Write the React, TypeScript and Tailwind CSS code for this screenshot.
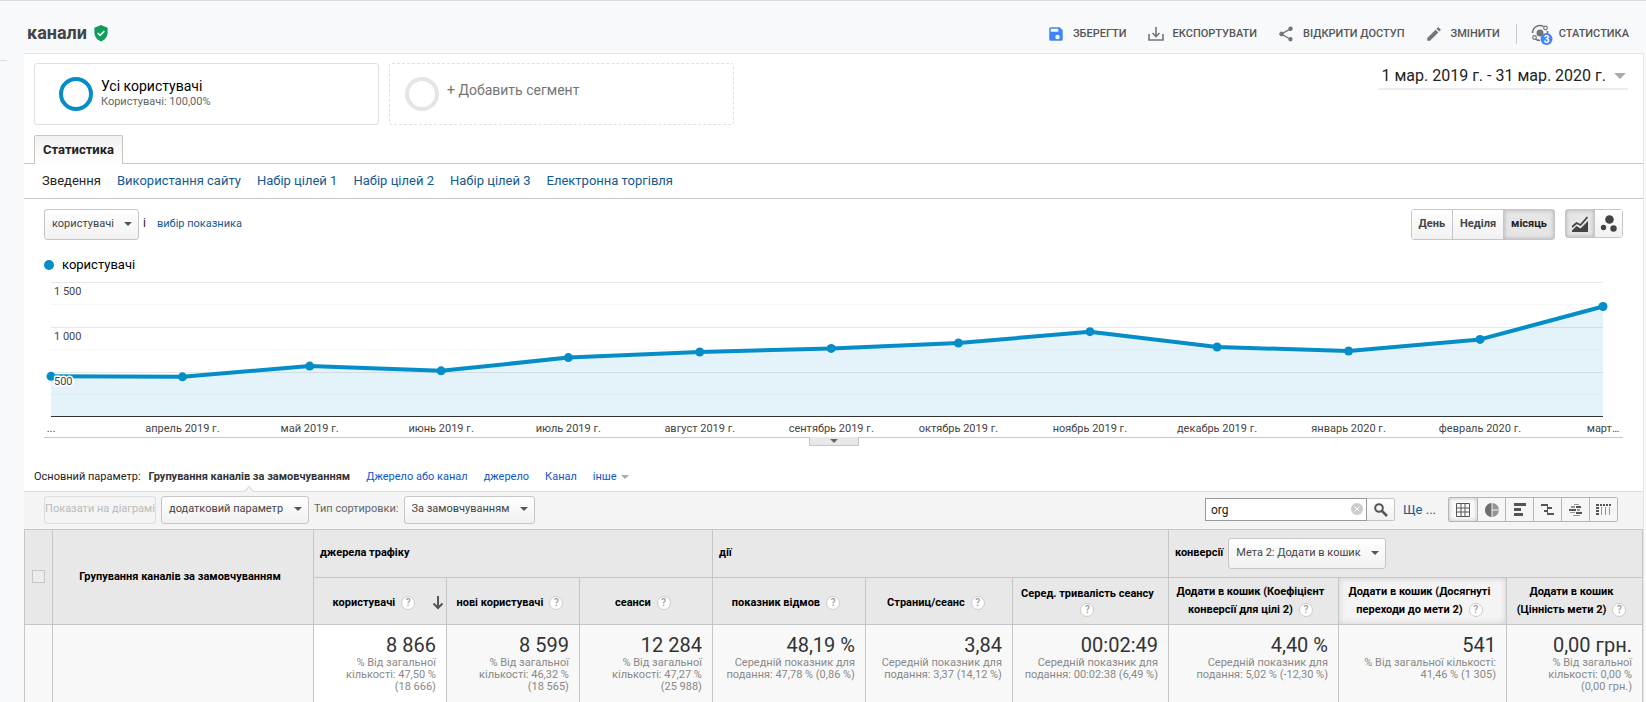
import { useState } from "react";

const icons = {
  save: "M17 3H5a2 2 0 0 0-2 2v14a2 2 0 0 0 2 2h14a2 2 0 0 0 2-2V7l-4-4zm-3 16a3 3 0 1 1 0-6 3 3 0 0 1 0 6zm1-10H5V5h10v4z",
  share: "M18 16.1c-.8 0-1.4.3-2 .8l-7.1-4.2a3.3 3.3 0 0 0 0-1.4L16 7.2a3 3 0 1 0-1-2.2c0 .2 0 .5.1.7L8 9.8a3 3 0 1 0 0 4.4l7.1 4.2-.1.6a2.9 2.9 0 1 0 3-2.9z",
  pencil: "M3 17.25V21h3.75L17.8 9.9l-3.7-3.7L3 17.25zM20.7 7c.4-.4.4-1 0-1.4l-2.3-2.3a1 1 0 0 0-1.4 0l-1.8 1.8 3.7 3.7L20.7 7z",
};

const points = [
  { label: "...", day: 0, users: 452 },
  { label: "апрель 2019 г.", day: 31, users: 446 },
  { label: "май 2019 г.", day: 61, users: 566 },
  { label: "июнь 2019 г.", day: 92, users: 513 },
  { label: "июль 2019 г.", day: 122, users: 660 },
  { label: "август 2019 г.", day: 153, users: 722 },
  { label: "сентябрь 2019 г.", day: 184, users: 762 },
  { label: "октябрь 2019 г.", day: 214, users: 822 },
  { label: "ноябрь 2019 г.", day: 245, users: 948 },
  { label: "декабрь 2019 г.", day: 275, users: 778 },
  { label: "январь 2020 г.", day: 306, users: 733 },
  { label: "февраль 2020 г.", day: 337, users: 862 },
  { label: "март…", day: 366, users: 1228 },
];

const goals = ["Використання сайту", "Набір цілей 1", "Набір цілей 2", "Набір цілей 3", "Електронна торгівля"];
const dimensions = ["Джерело або канал", "джерело", "Канал"];

const columns = [
  { title: ["користувачі"], value: "8 866", note: ["% Від загальної", "кількості: 47,50 %", "(18 666)"], sorted: true },
  { title: ["нові користувачі"], value: "8 599", note: ["% Від загальної", "кількості: 46,32 %", "(18 565)"] },
  { title: ["сеанси"], value: "12 284", note: ["% Від загальної", "кількості: 47,27 %", "(25 988)"] },
  { title: ["показник відмов"], value: "48,19 %", note: ["Середній показник для", "подання: 47,78 % (0,86 %)"] },
  { title: ["Страниц/сеанс"], value: "3,84", note: ["Середній показник для", "подання: 3,37 (14,12 %)"] },
  { title: ["Серед. тривалість сеансу", ""], value: "00:02:49", note: ["Середній показник для", "подання: 00:02:38 (6,49 %)"] },
  { title: ["Додати в кошик (Коефіцієнт", "конверсії для цілі 2)"], value: "4,40 %", note: ["Середній показник для", "подання: 5,02 % (-12,30 %)"] },
  { title: ["Додати в кошик (Досягнуті", "переходи до мети 2)"], value: "541", note: ["% Від загальної кількості:", "41,46 % (1 305)"], active: true },
  { title: ["Додати в кошик", "(Цінність мети 2)"], value: "0,00 грн.", note: ["% Від загальної", "кількості: 0,00 %", "(0,00 грн.)"] },
];

function Icon({ d, className }: { d: string; className: string }) {
  return (
    <svg viewBox="0 0 24 24" className={className} fill="currentColor" aria-hidden="true">
      <path d={d} />
    </svg>
  );
}

function Caret({ className }: { className: string }) {
  return (
    <svg viewBox="0 0 8 4" className={className} fill="currentColor" aria-hidden="true">
      <path d="M0 0h8L4 4z" />
    </svg>
  );
}

function Dropdown({ label, option, className }: { label: string; option: string; className: string }) {
  return (
    <span className="relative inline-flex">
      <select
        aria-label={label}
        className={`appearance-none rounded-[3px] border border-[#c6c6c6] bg-linear-to-b from-white to-[#f1f1f1] pr-6 pl-[7px] text-[11px] font-normal text-[#444] ${className}`}
      >
        <option>{option}</option>
      </select>
      <span className="pointer-events-none absolute inset-y-0 right-[7px] flex items-center pb-0.5">
        <Caret className="h-1 w-2 text-[#555]" />
      </span>
    </span>
  );
}

function Help() {
  return (
    <button
      type="button"
      aria-label="Довідка"
      className="inline-flex size-3.5 shrink-0 items-center justify-center rounded-full border border-[#ccc] bg-white text-[10px] leading-none font-medium text-[#999]"
    >
      ?
    </button>
  );
}

function Chart() {
  const y = (users: number) => 136 - (users * 135) / 1500;
  const line = points.map((p) => `${p.day},${y(p.users)}`).join(" ");

  return (
    <svg className="block h-[156px] w-full overflow-visible text-[11px]" role="img" aria-label="користувачі">
      {[250, 500, 750, 1000, 1250, 1500].map((v) => (
        <rect key={v} x="0" y={Math.floor(y(v))} width="100%" height="1" fill={v % 500 ? "#f6f6f6" : "#e8e8e8"} />
      ))}
      <svg width="100%" height="136" viewBox="0 0 366 136" preserveAspectRatio="none" overflow="visible">
        <polygon points={`0,136 ${line} 366,136`} fill="#058dc7" fillOpacity="0.11" />
        <polyline points={line} fill="none" stroke="#058dc7" strokeWidth="4" strokeLinejoin="round" vectorEffect="non-scaling-stroke" />
      </svg>
      {points.map((p) => (
        <circle key={p.day} cx={`${(p.day / 366) * 100}%`} cy={y(p.users)} r="4.5" fill="#058dc7" />
      ))}
      <rect x="0" y="135" width="100%" height="1" fill="#333" />
      {["1 500", "1 000", "500"].map((text, i) => (
        <text key={text} x="3" y={14 + i * 45} fill="#444" stroke="#fff" strokeWidth="3" strokeLinejoin="round" paintOrder="stroke">
          {text}
        </text>
      ))}
      {points.map((p) => (
        <text key={p.label} x={`${(p.day / 366) * 100}%`} y="151" textAnchor="middle" fill="#444">
          {p.label}
        </text>
      ))}
    </svg>
  );
}

const views = [
  { name: "Таблиця", art: <path d="M1.5 1.5h13v13h-13zM1.5 6h13M1.5 10h13M6 1.5v13M10 1.5v13" fill="none" stroke="currentColor" /> },
  {
    name: "Відсоток",
    art: (
      <>
        <circle cx="8" cy="8" r="7" opacity="0.6" />
        <path d="M8 1a7 7 0 0 0 0 14z" opacity="0.6" />
        <path d="M8 1v14M8 8h7" stroke="#f6f6f6" />
      </>
    ),
  },
  { name: "Ефективність", art: <path d="M2 1h12v3H2zM2 6h7v3H2zM2 11h9v3H2z" /> },
  { name: "Порівняння", art: <path d="M1 2h6v2H1zM8 5h4v2H8zM4 8h3v2H4zM8 11h6v2H8zM7 2h1v11H7z" /> },
  {
    name: "Хмара термінів",
    art: (
      <>
        <path d="M6 2h5v1H6zM3 4h4v2H3zM9 7h3v2H9zM2 10h5v1H2zM5 13h7v1H5z" opacity="0.6" />
        <path d="M8 4h5v2H8zM1 7h7v2H1zM8 10h6v2H8z" />
      </>
    ),
  },
  {
    name: "Зведення",
    art: (
      <>
        <path d="M0 2h3v2H0zM4 2h2v2H4zM7 2h2v2H7zM10 2h2v2h-2zM13 2h2v2h-2zM0 5h3v2H0zM0 8h3v2H0zM0 11h3v2H0z" />
        <path d="M5 5h1v8H5zM9 5h1v8H9zM13 5h1v8h-1z" opacity="0.6" />
      </>
    ),
  },
];

export default function App() {
  const [period, setPeriod] = useState("місяць");
  const [search, setSearch] = useState("org");
  const [view, setView] = useState("Таблиця");

  return (
    <div className="min-h-screen overflow-hidden border-t border-[#dadce0] bg-[#f8f9fb] font-[Roboto,sans-serif] text-xs text-[#222]">
      <header className="flex h-13 items-center justify-between pr-[17px] pl-[27px]">
        <div className="flex items-center gap-1.5 pt-3">
          <h1 className="text-lg font-bold text-[#444]">канали</h1>
          <svg viewBox="0 0 16 18" className="h-[17px] w-4" aria-hidden="true">
            <path d="M8 0 15 3v5c0 4.5-3 8-7 9.5C4 16 1 12.5 1 8V3z" fill="#0f9d58" />
            <path d="m4.5 8.5 2.5 2.5 4.5-4.5" fill="none" stroke="#fff" strokeWidth="1.6" />
          </svg>
        </div>
        <div className="flex items-center pt-3.5 text-[11px] font-medium text-[#555]">
          <button type="button" className="flex items-center gap-2">
            <Icon d={icons.save} className="size-[18px] text-[#4285f4]" />
            ЗБЕРЕГТИ
          </button>
          <button type="button" className="ml-5 flex items-center gap-2">
            <svg viewBox="0 0 18 18" className="size-[18px] text-[#757575]" fill="none" stroke="currentColor" strokeWidth="1.6" aria-hidden="true">
              <path d="M2 9v6h14V9M9 2v9M5.5 8 9 11.5 12.5 8" />
            </svg>
            ЕКСПОРТУВАТИ
          </button>
          <button type="button" className="ml-5 flex items-center gap-2">
            <Icon d={icons.share} className="size-[18px] text-[#757575]" />
            ВІДКРИТИ ДОСТУП
          </button>
          <button type="button" className="ml-5 flex items-center gap-2">
            <Icon d={icons.pencil} className="size-[18px] text-[#757575]" />
            ЗМІНИТИ
          </button>
          <span className="mr-3.5 ml-4 h-5 w-px bg-[#ccc]" />
          <button type="button" className="flex items-center gap-1.5">
            <svg viewBox="0 0 22 22" className="size-[22px]" aria-hidden="true">
              <circle cx="9" cy="10" r="3.5" fill="#757575" />
              <path d="M1.500 10a7.500 7.500 0 0 1 11-6.500M16.500 8v4M4.500 16a7.500 7.500 0 0 0 4.500 1.500" fill="none" stroke="#757575" strokeWidth="1.6" />
              <circle cx="14.5" cy="5" r="1.8" fill="none" stroke="#757575" strokeWidth="1.2" />
              <circle cx="3.5" cy="14.5" r="1.8" fill="none" stroke="#757575" strokeWidth="1.2" />
              <circle cx="15.5" cy="16" r="6" fill="#4285f4" />
              <text x="15.5" y="19.5" textAnchor="middle" fill="#fff" fontSize="10" fontWeight="700">3</text>
            </svg>
            СТАТИСТИКА
          </button>
        </div>
      </header>

      <div className="flex">
        <div className="w-6 shrink-0 pt-[7px]">
          <div className="h-px w-[7px] bg-[#dadce0]" />
        </div>
        <main className="mr-0.5 min-w-0 flex-1 border-t border-r border-[#e4e5e7] bg-white">
          <section className="flex items-start justify-between pt-[9px] pr-[15px] pl-2.5">
            <div className="flex gap-2.5">
              <button type="button" className="flex h-[62px] w-[345px] items-center gap-2 rounded-[3px] border border-[#e0e0e0] pl-6 text-left">
                <span className="size-[34px] rounded-full border-4 border-[#058dc7]" />
                <span>
                  <span className="block text-sm leading-4 text-black">Усі користувачі</span>
                  <span className="block text-[11px] leading-4 text-[#666]">Користувачі: 100,00%</span>
                </span>
              </button>
              <button type="button" className="flex h-[62px] w-[345px] items-center gap-2 rounded-[3px] border border-dashed border-[#e0e0e0] pl-[15px] text-left text-sm text-[#757575]">
                <span className="size-[34px] rounded-full border-4 border-[#e5e5e5]" />
                <span className="pb-2">+ Добавить сегмент</span>
              </button>
            </div>
            <button type="button" className="flex h-[27px] items-center gap-2 border-b-2 border-[#ececec] pr-0.5 pl-[3px] text-base text-[#222]">
              1 мар. 2019 г. - 31 мар. 2020 г.
              <Caret className="h-1.5 w-3 text-[#aaa]" />
            </button>
          </section>

          <div className="mt-2.5 flex border-b border-[#c6c6c6] pl-2.5">
            <button type="button" className="-mb-px h-[29px] rounded-t-[2px] border border-b-0 border-[#c6c6c6] bg-linear-to-b from-[#f1f1f1] to-white px-2 text-[13px] font-bold text-[#222]">
              Статистика
            </button>
          </div>
          <nav className="flex h-[35px] items-center gap-4 border-b border-[#c6c6c6] pl-[18px] text-[13px] text-[#15598f]">
            <a href="#summary" className="text-[#222]">Зведення</a>
            {goals.map((g) => (
              <a key={g} href="#goals">{g}</a>
            ))}
          </nav>

          <section className="px-5">
            <div className="flex items-start justify-between pt-2.5">
              <div className="flex items-center">
                <Dropdown label="Показник" option="користувачі" className="h-[31px]" />
                <span className="ml-1 pb-1 text-xs">і</span>
                <a href="#metric" className="ml-[11px] text-[11px] text-[#15598f]">вибір показника</a>
              </div>
              <div className="flex items-start gap-2.5">
                <div className="flex h-[31px] rounded-[3px] border border-[#c6c6c6] text-[11px] font-bold text-[#444]">
                  {["День", "Неділя", "місяць"].map((p) => (
                    <button
                      key={p}
                      type="button"
                      onClick={() => setPeriod(p)}
                      className={`border-l border-[#c6c6c6] px-[7px] first:border-l-0 ${
                        p === period ? "bg-[#e6e6e6] text-[#222] inset-shadow-[0_0_4px_#aaa]" : "bg-linear-to-b from-white to-[#f1f1f1]"
                      }`}
                    >
                      {p}
                    </button>
                  ))}
                </div>
                <div className="flex h-[29px] rounded-[3px] border border-[#c6c6c6] text-[#444]">
                  <button type="button" aria-label="Лінійна діаграма" className="flex w-7 items-center justify-center bg-[#e6e6e6] inset-shadow-[0_0_4px_#aaa]">
                    <svg viewBox="0 0 16 16" className="size-4" fill="currentColor" aria-hidden="true">
                      <path d="M0 16v-1.5l4.500-4.500 4 2.500L16 5v11z" />
                      <path d="m0 11 4.500-4 4 2L15.500 1" fill="none" stroke="currentColor" strokeWidth="1.8" />
                    </svg>
                  </button>
                  <button type="button" aria-label="Діаграма руху" className="flex w-7 items-center justify-center border-l border-[#c6c6c6] bg-linear-to-b from-white to-[#f1f1f1]">
                    <svg viewBox="0 0 18 18" className="size-[18px]" fill="currentColor" aria-hidden="true">
                      <circle cx="9.5" cy="4.5" r="4.3" />
                      <circle cx="3.5" cy="12.5" r="2.7" />
                      <circle cx="13.5" cy="13.5" r="3.2" />
                    </svg>
                  </button>
                </div>
              </div>
            </div>

            <div className="mt-[17px] flex h-4 items-center gap-2 text-[13px] text-black">
              <span className="size-2.5 rounded-full bg-[#058dc7]" />
              користувачі
            </div>
            <div className="mt-2 border-b border-[#c6c6c6] pr-5 pl-[7px]">
              <Chart />
            </div>
            <button type="button" aria-label="Розгорнути" className="mx-auto -mt-px flex h-[9px] w-[50px] items-center justify-center border border-t-0 border-[#c6c6c6] bg-[#e8e8e8] text-[#666]">
              <Caret className="h-1 w-2" />
            </button>
          </section>

          <div className="mt-[23px] flex h-[22px] items-start pl-2.5 text-[11px] leading-4 text-[#1155cc]">
            <span className="text-[#222]">Основний параметр:</span>
            <span className="relative ml-2 font-bold text-[#333]">
              Групування каналів за замовчуванням
              <svg viewBox="0 0 12 7" className="absolute top-4 left-1/2 h-[7px] w-3 -translate-x-1/2" aria-hidden="true">
                <path d="m1 7 5-5.500L11 7" fill="#f4f4f4" stroke="#ccc" />
              </svg>
            </span>
            {dimensions.map((d) => (
              <a key={d} href="#dimension" className="ml-4">{d}</a>
            ))}
            <a href="#other" className="ml-4 flex items-center gap-1">
              інше <Caret className="h-1 w-2 text-[#aaa]" />
            </a>
          </div>

          <div className="flex h-[38px] items-center justify-between border-t border-[#e0e0e0] bg-[#f4f4f4] pr-[25px] pb-0.5 pl-5">
            <div className="flex items-center text-[11px] text-[#666]">
              <button type="button" disabled className="h-7 w-[112px] rounded-[3px] border border-[#ddd] whitespace-nowrap text-[#bbb]">
                Показати на діаграмі
              </button>
              <span className="ml-[5px] inline-flex">
                <Dropdown label="Додатковий параметр" option="додатковий параметр" className="h-7" />
              </span>
              <span className="mx-[5px]">Тип сортировки:</span>
              <Dropdown label="Тип сортировки" option="За замовчуванням" className="h-7" />
            </div>
            <div className="flex items-center">
              <div className="relative flex h-[23px]">
                <input
                  aria-label="Пошук"
                  value={search}
                  onChange={(e) => setSearch(e.target.value)}
                  className="w-[162px] border border-[#999] bg-white pr-6 pl-[5px] text-xs text-[#222]"
                />
                <button type="button" aria-label="Очистити" onClick={() => setSearch("")} className="absolute top-[5px] left-[146px]">
                  <svg viewBox="0 0 12 12" className="size-3" aria-hidden="true">
                    <circle cx="6" cy="6" r="6" fill="#ccc" />
                    <path d="m3.500 3.500 5 5m0-5-5 5" stroke="#fff" />
                  </svg>
                </button>
                <button type="button" aria-label="Шукати" className="flex w-7 items-center justify-center rounded-r-[2px] border border-l-0 border-[#c6c6c6] bg-linear-to-b from-white to-[#f1f1f1]">
                  <svg viewBox="0 0 14 14" className="size-3.5" fill="none" stroke="#555" aria-hidden="true">
                    <circle cx="5" cy="5" r="3.8" strokeWidth="2" />
                    <path d="m8 8 5 5" strokeWidth="2.5" />
                  </svg>
                </button>
              </div>
              <a href="#more" className="ml-2 text-[13px] text-[#15598f]">Ще ...</a>
              <div className="ml-3 flex h-[25px] rounded-[2px] border border-[#b5b5b5]">
                {views.map((v) => (
                  <button
                    key={v.name}
                    type="button"
                    aria-label={v.name}
                    onClick={() => setView(v.name)}
                    className={`flex w-7 items-center justify-center border-l border-[#b5b5b5] text-[#555] first:border-l-0 ${
                      v.name === view ? "bg-[#fafafa] inset-shadow-[0_0_4px_#bbb]" : "bg-[#f6f6f6]"
                    }`}
                  >
                    <svg viewBox="0 0 16 16" className="size-4" fill="currentColor" aria-hidden="true">
                      {v.art}
                    </svg>
                  </button>
                ))}
              </div>
            </div>
          </div>

          <table className="w-full table-fixed border-collapse text-[11px] text-black">
            <colgroup>
              <col className="w-7" />
              <col />
              <col className="w-[133px]" />
              <col className="w-[133px]" />
              <col className="w-[133px]" />
              <col className="w-[153px]" />
              <col className="w-[147px]" />
              <col className="w-[156px]" />
              <col className="w-[170px]" />
              <col className="w-[168px]" />
              <col className="w-[136px]" />
            </colgroup>
            <thead className="bg-[#e8e8e8] [&_th]:border [&_th]:border-[#c6c6c6]">
              <tr className="h-12 text-left">
                <th rowSpan={2} className="text-center">
                  <input type="checkbox" aria-label="Вибрати всі" className="size-[13px] appearance-none border border-[#c6c6c6] bg-[#ececec] align-middle" />
                </th>
                <th rowSpan={2} className="pr-1.5 text-center">Групування каналів за замовчуванням</th>
                <th colSpan={3} className="px-1.5">джерела трафіку</th>
                <th colSpan={3} className="px-1.5">дії</th>
                <th colSpan={3} className="px-1.5">
                  <div className="flex items-center gap-[5px]">
                    конверсії
                    <Dropdown label="Мета" option="Мета 2: Додати в кошик" className="h-[31px]" />
                  </div>
                </th>
              </tr>
              <tr className="h-[47px]">
                {columns.map((c) => (
                  <th
                    key={c.value}
                    className={`pl-0.5 leading-[18px] ${c.sorted ? "pr-0.5" : "pr-2"} ${c.title.length > 1 ? "" : "pt-1"} ${
                      c.active ? "bg-[#f4f4f4] inset-shadow-[0_0_6px_#ccc]" : ""
                    }`}
                  >
                    <div className="flex items-center">
                      <div className="flex-1">
                        {c.title.map((line, i) => (
                          <div key={i} className="flex items-center justify-center gap-1.5 whitespace-nowrap">
                            {line && <span>{line}</span>}
                            {i === c.title.length - 1 && <Help />}
                          </div>
                        ))}
                      </div>
                      {c.sorted && (
                        <svg viewBox="0 0 12 14" className="h-3.5 w-3" fill="none" stroke="#555" strokeWidth="2" aria-hidden="true">
                          <path d="M6 0v12M1.5 7.5 6 12l4.500-4.500" />
                        </svg>
                      )}
                    </div>
                  </th>
                ))}
              </tr>
            </thead>
            <tbody>
              <tr className="h-20 bg-[#f8f8f8] text-right align-top [&_td]:border [&_td]:border-[#c6c6c6]">
                <td />
                <td />
                {columns.map((c) => (
                  <td key={c.value} className={`px-2.5 pt-2 ${c.sorted ? "bg-white" : ""}`}>
                    <div className="text-xl leading-6 text-[#333]">{c.value}</div>
                    <div className="leading-3 whitespace-nowrap text-[#888]">
                      {c.note.map((n) => (
                        <div key={n}>{n}</div>
                      ))}
                    </div>
                  </td>
                ))}
              </tr>
            </tbody>
          </table>
        </main>
      </div>
    </div>
  );
}
